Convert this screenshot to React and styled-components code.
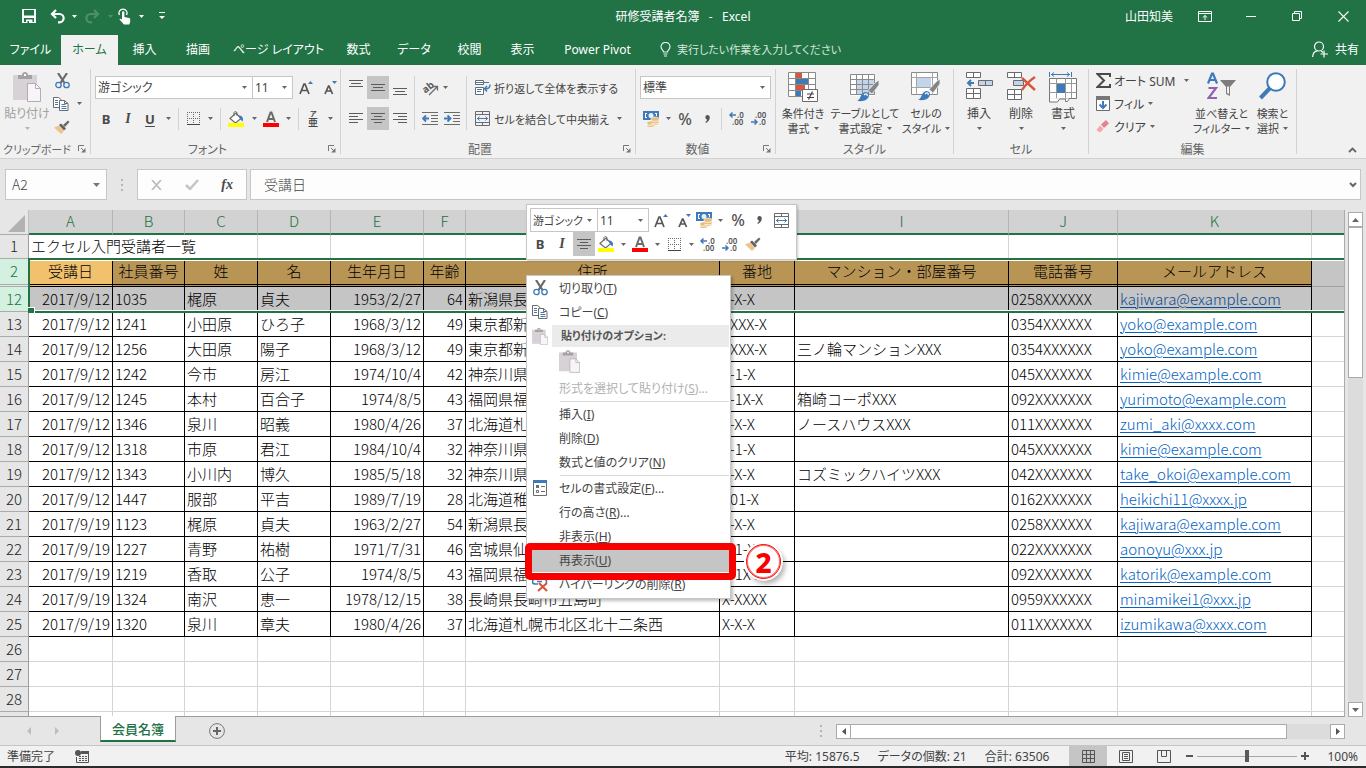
import React from "react";
import styled, { createGlobalStyle, css } from "styled-components";

const UI = `"Noto Sans", "Noto Sans CJK JP", sans-serif`;
const CELL = `"Noto Sans CJK JP", "Noto Sans", sans-serif`;
const GREEN = "#217346";
const GRAY = "#6b6b6b";
const BLUE = "#3f7ab8";

const Global = createGlobalStyle`
  * { box-sizing: border-box; }
  body { margin: 0; font-family: ${UI}; font-size: 12px; color: #444; font-feature-settings: "palt"; overflow: hidden; }
  button, input, select { font: inherit; font-feature-settings: inherit; color: inherit; }
  button { border: 0; padding: 0; background: none; white-space: nowrap; }
  svg { display: block; flex: none; }
`;

/* ---------- page frame ---------- */
const Window = styled.div`
  position: relative;
  height: 100vh;
  display: flex;
  flex-direction: column;
  background: #e6e6e6;
  border-bottom: 2px solid #2b2b2b;
`;
const TitleBar = styled.header`
  height: 35px;
  display: grid;
  grid-template-columns: 1fr auto 1fr;
  align-items: center;
  padding-bottom: 3px;
  background: ${GREEN};
  color: #fff;
  flex: none;
`;
const QuickBar = styled.div`
  display: flex;
  align-items: center;
  padding-left: 18px;
`;
const WindowTools = styled.div`
  display: flex;
  align-items: center;
  justify-content: flex-end;
`;
const UserName = styled.span`margin-right: 9px;`;
const DocTitle = styled.h1`
  margin: 0;
  font-size: 12px;
  font-weight: 400;
  white-space: pre;
`;
const TabBar = styled.nav`
  height: 30px;
  display: flex;
  align-items: stretch;
  background: ${GREEN};
  color: #fff;
  flex: none;
`;
const Tab = styled.button`
  width: ${(p) => p.$w}px;
  padding-bottom: 2px;
  ${(p) => p.$active && css`background: #f1f1f1; color: ${GREEN};`}
`;
const TellMe = styled.button`
  display: flex;
  align-items: center;
  gap: 6px;
  margin-left: 14px;
  padding-bottom: 2px;
  font-size: 11px;
  color: #d5e6dc;
`;
const Share = styled.button`
  display: flex;
  align-items: center;
  gap: 7px;
  margin-left: auto;
  padding: 0 7px 2px 0;
`;

/* ---------- ribbon ---------- */
const Ribbon = styled.div`
  height: 94px;
  display: flex;
  background: #f1f1f1;
  border-bottom: 1px solid #d2d2d2;
  padding: 4px 0 1px;
  flex: none;
`;
const Group = styled.section`
  width: ${(p) => p.$w}px;
  display: flex;
  flex-direction: column;
  padding-right: 1px;
  background: linear-gradient(#d2d2d2, #d2d2d2) right top / 1px calc(100% - 3px) no-repeat;
`;
const GroupBody = styled.div`
  flex: 1;
  min-height: 0;
  display: flex;
  padding-left: ${(p) => p.$pad || 0}px;
`;
const GroupFoot = styled.div`
  height: 17px;
  flex: none;
  display: grid;
  grid-template-columns: ${(p) => (p.$launch ? "1fr 16px" : "1fr")};
  align-items: center;
  justify-items: center;
  color: #666;
  white-space: nowrap;
  font-size: ${(p) => (p.$compact ? 11 : 12)}px;
`;
const Stack = styled.div`
  display: flex;
  flex-direction: column;
  gap: ${(p) => p.$gap || 0}px;
  padding-top: ${(p) => p.$top || 0}px;
`;
const Line = styled.div`
  display: flex;
  align-items: center;
  height: ${(p) => p.$h || 23}px;
`;
const ToolButton = styled.button`
  width: ${(p) => p.$w || 22}px;
  height: ${(p) => p.$h || 23}px;
  display: flex;
  align-items: center;
  justify-content: center;
  flex: none;
  background: ${(p) => (p.$on ? "#c5c5c5" : "none")};
`;
const TextTool = styled.button`
  display: flex;
  align-items: center;
  gap: ${(p) => p.$gap || 3}px;
  height: 23px;
  padding: 0 4px;
  font-size: ${(p) => (p.$compact ? 11 : 12)}px;
`;
const BigTool = styled.button`
  width: ${(p) => p.$w}px;
  display: flex;
  flex-direction: column;
  align-items: center;
  line-height: 15px;
  padding-top: 3px;
  font-size: ${(p) => (p.$compact ? 11 : 12)}px;
  color: ${(p) => (p.$off ? "#a0a0a0" : "inherit")};
`;
const BigIcon = styled.span`
  height: 34px;
`;
const BigLine = styled.span`
  display: flex;
  align-items: center;
  justify-content: center;
  gap: 4px;
  height: 15px;
`;
const Rule = styled.span`
  width: 1px;
  height: ${(p) => p.$h || 22}px;
  margin: 0 4px 0 3px;
  background: #d2d2d2;
  flex: none;
`;
const Combo = styled.span`
  width: ${(p) => p.$w}px;
  height: ${(p) => p.$h || 23}px;
  display: grid;
  align-items: center;
  background: #fff;
  border: 1px solid #c6c6c6;
  font-size: ${(p) => (p.$compact ? 11 : 12)}px;
  flex: none;
  & + & { border-left-width: ${(p) => (p.$joined ? 0 : 1)}px; }
  & > * { grid-area: 1 / 1; }
  & > svg { justify-self: end; margin-right: 5px; pointer-events: none; }
`;
const Select = styled.select`
  appearance: none;
  border: 0;
  background: none;
  width: 100%;
  height: 100%;
  padding: 0 2px;
`;
const Collapse = styled.button`
  margin: auto 9px 4px auto;
`;
const Letter = styled.span`
  font-weight: 700;
  font-size: ${(p) => p.$size || 13}px;
  line-height: 16px;
  font-style: ${(p) => (p.$italic ? "italic" : "normal")};
  font-family: ${(p) => (p.$italic ? `"Liberation Serif", serif` : UI)};
  text-decoration: ${(p) => (p.$under ? "underline" : "none")};
  text-underline-offset: 2px;
  color: #4a4a4a;
`;
const Percent = styled.span`
  font-size: 16px;
  font-weight: 500;
  color: #555;
`;

/* ---------- formula bar ---------- */
const FormulaBar = styled.div`
  height: 51px;
  display: flex;
  align-items: center;
  padding: 0 5px;
  flex: none;
`;
const FieldBox = styled.div`
  height: 31px;
  display: flex;
  align-items: center;
  background: #fdfdfd;
  border: 1px solid #c6c6c6;
`;
const NameField = styled(FieldBox)`
  width: 102px;
  padding: 0 6px;
`;
const FormulaTools = styled(FieldBox)`
  width: 110px;
  margin: 0 3px 0 14px;
  justify-content: space-between;
  padding: 0 13px;
`;
const FormulaField = styled(FieldBox)`
  flex: 1;
  padding: 0 3px 0 13px;
`;
const PlainInput = styled.input`
  border: 0;
  background: none;
  outline: 0;
  padding: 0 0 2px;
  flex: 1;
  min-width: 0;
  font-family: ${CELL};
  font-size: 14px;
  font-weight: 300;
`;
const Grip = styled.span`
  width: 2px;
  height: 12px;
  margin-left: 14px;
  background: repeating-linear-gradient(#b5b5b5 0 2px, transparent 2px 5px);
`;

/* ---------- sheet ---------- */
const Body = styled.main`
  flex: 1;
  min-height: 0;
  display: flex;
`;
const Pane = styled.div`
  position: relative;
  flex: 1;
  overflow: hidden;
  background: #fff;
  border-right: 1px solid #ababab;
  border-bottom: 1px solid #9c9c9c;
`;
const Grid = styled.table`
  width: 100%;
  table-layout: fixed;
  border-collapse: separate;
  border-spacing: 0;
  font-family: ${CELL};
  font-size: 15px;
  font-weight: 300;
  font-feature-settings: normal;
  line-height: 21px;
  color: #000;
`;
const Col = styled.col`width: ${(p) => (p.$w ? p.$w + "px" : "auto")};`;
const Row = styled.tr`height: ${(p) => p.$h || 25}px;`;
const ColHead = styled.th`
  padding: 0 0 2px;
  font-weight: 300;
  color: ${GREEN};
  background: #d2d2d2;
  border-right: 1px solid #b4b4b4;
  border-bottom: 2px solid ${GREEN};
  &:last-child { border-right: 0; }
`;
const Corner = styled.th`
  padding: 0 3px 2px 0;
  background: #e6e6e6;
  border-right: 1px solid #c0c0c0;
  border-bottom: 1px solid #ababab;
  vertical-align: bottom;
  svg { margin-left: auto; }
`;
const RowHead = styled.th`
  padding: 0 0 2px;
  font-weight: 300;
  background: ${(p) => (p.$on ? "#d3f0e0" : "#e6e6e6")};
  color: ${(p) => (p.$on ? GREEN : "#222")};
  border-right: 1px solid #9c9c9c;
  border-bottom: ${(p) => (p.$double ? "3px double" : "1px solid")} #ababab;
`;
const Cell = styled.td`
  padding: 0 2px 2px;
  white-space: nowrap;
  overflow: hidden;
  text-align: ${(p) => p.$align || "left"};
  border-right: 1px solid ${(p) => (p.$line ? "#000" : "#d4d4d4")};
  border-bottom: 1px solid ${(p) => (p.$line ? "#000" : "#d4d4d4")};
  background: ${(p) => (p.$sel ? "#c5c5c5" : "#fff")};
  &:last-child { border-right: 0; ${(p) => p.$sel && css`border-bottom-color: #a0a0a0;`} }
`;
const TitleCell = styled(Cell)`
  overflow: visible;
`;
const FieldCell = styled(Cell)`
  text-align: center;
  background: ${(p) => (p.$current ? "#f2c16e" : "#b99555")};
  border-bottom: 3px double #000;
`;
const Mail = styled.a`
  color: ${(p) => (p.$sel ? "#0b4c92" : "#0563c1")};
  text-underline-offset: 2px;
  text-decoration-thickness: 1px;
`;
const Selection = styled.div`
  position: absolute;
  left: 28px;
  right: 0;
  top: 48px;
  height: 55px;
  border: 2px solid ${GREEN};
  border-right: 0;
  box-shadow: inset 0 1px #fff, inset 0 -1px #fff;
  pointer-events: none;
  &::after {
    content: "";
    position: absolute;
    left: -2px;
    bottom: -2px;
    width: 6px;
    height: 5px;
    background: ${GREEN};
    border-right: 1px solid #fff;
    border-top: 1px solid #fff;
  }
`;
const VScroll = styled.div`
  width: 21px;
  display: flex;
  flex-direction: column;
  padding: 2px 3px 0;
  & > div { flex: 1; background: #dcdcdc; }
`;
const VThumb = styled.span`
  display: block;
  height: 151px;
  background: #fff;
  border: 1px solid #ababab;
`;
const ScrollButton = styled.button`
  width: 15px;
  height: 15px;
  display: grid;
  place-items: center;
  background: #fff;
  border: 1px solid #ababab;
  flex: none;
`;

/* ---------- bottom ---------- */
const SheetBar = styled.div`
  height: 28px;
  display: flex;
  padding-right: 21px;
  flex: none;
`;
const SheetNav = styled.div`
  width: 100px;
  display: flex;
  align-items: center;
  gap: 24px;
  padding-left: 27px;
`;
const SheetTab = styled.button`
  width: 76px;
  height: 26px;
  margin-top: -1px;
  position: relative;
  background: #fff;
  color: ${GREEN};
  font-family: ${CELL};
  font-size: 13px;
  font-weight: 500;
  border: 1px solid #9c9c9c;
  border-top: 0;
  border-bottom: 2px solid ${GREEN};
`;
const AddSheet = styled.button`margin-left: 33px;`;
const HScroll = styled.div`
  width: 509px;
  height: 15px;
  margin: 7px 0 0 14px;
  display: flex;
  & > div { flex: 1; background: #dcdcdc; }
`;
const HThumb = styled.span`
  display: block;
  width: 91%;
  height: 15px;
  background: #fff;
  border: 1px solid #ababab;
  border-left: 0;
`;
const SheetGrip = styled(Grip)`
  margin: auto 0 auto auto;
`;
const StatusBar = styled.footer`
  height: 21px;
  display: flex;
  align-items: center;
  padding: 0 8px 0 7px;
  background: #f1f1f1;
  border-top: 1px solid #c6c6c6;
  flex: none;
`;
const StatusText = styled.span`
  margin-right: ${(p) => p.$gap}px;
  white-space: nowrap;
`;
const Totals = styled.span`margin-left: auto; display: flex;`;
const ZoomLevel = styled.output`margin-left: 16px;`;
const ZoomRange = styled.input`
  appearance: none;
  width: 100px;
  height: 12px;
  margin: 0 2px;
  background: linear-gradient(#a6a6a6, #a6a6a6) center / 100% 1px no-repeat;
  &::-webkit-slider-thumb { appearance: none; width: 4px; height: 12px; background: #5a5a5a; }
`;
const ZoomSign = styled.button`
  width: 12px;
  display: grid;
  place-items: center;
`;

/* ---------- floating parts ---------- */
const MiniBar = styled.div`
  position: absolute;
  left: 526px;
  top: 204px;
  width: 271px;
  padding: 3px 2px;
  background: #fff;
  border: 1px solid #c6c6c6;
  box-shadow: 1px 1px 2px rgba(0, 0, 0, 0.2);
  & > div:first-child { padding-left: 1px; }
`;
const Menu = styled.ul`
  position: absolute;
  left: 526px;
  top: 275px;
  width: 205px;
  margin: 0;
  padding: 0 0 2px;
  list-style: none;
  background: #fff;
  border: 1px solid #c6c6c6;
  box-shadow: 2px 2px 3px rgba(0, 0, 0, 0.25);
`;
const MenuItem = styled.button`
  width: 100%;
  height: ${(p) => p.$h || 24}px;
  display: grid;
  grid-template-columns: 26px 1fr;
  column-gap: 6px;
  align-items: center;
  justify-items: start;
  & > :first-child { justify-self: center; }
  color: ${(p) => (p.$off ? "#b1b1b1" : "#444")};
  background: ${(p) => (p.$on ? "#c5c5c5" : "none")};
`;
const MenuHead = styled.div`
  height: 22px;
  margin: 1px 0 0;
  display: grid;
  grid-template-columns: 26px 1fr;
  align-items: center;
  & > svg { justify-self: center; }
`;
const MenuHeadText = styled.strong`
  height: 22px;
  line-height: 22px;
  margin: 0 1px 0 -1px;
  padding-left: 9px;
  background: #ebebeb;
  color: #555;
  font-size: 11px;
  font-weight: 600;
`;
const MenuRule = styled.hr`
  height: 1px;
  margin: 1px 1px 0 33px;
  border: 0;
  background: #dadada;
`;
const RedFrame = styled.div`
  position: absolute;
  left: 525px;
  top: 543px;
  width: 211px;
  height: 37px;
  border: 7px solid #f80000;
  border-radius: 5px;
  pointer-events: none;
`;
const StepBadge = styled.div`
  position: absolute;
  left: 746px;
  top: 544px;
  width: 35px;
  height: 35px;
  display: grid;
  place-items: center;
  border: 1px solid #f80000;
  border-radius: 50%;
  background: #fff;
  color: #f80000;
  font-size: 28px;
  line-height: 32px;
  font-weight: 800;
  box-shadow: inset 0 0 0 1px #ff6a6a, 0 0 0 2px #fff, 3px 4px 5px 1px rgba(0, 0, 0, 0.3);
`;

/* ---------- drawings ---------- */
const Svg = ({ w, h = w, children, ...rest }) => (
  <svg width={w} height={h} viewBox={`0 0 ${w} ${h}`} fill="none" aria-hidden="true" {...rest}>{children}</svg>
);
const Caret = ({ c = "#666", up }) => (
  <Svg w={5} h={3}><path d={up ? "M0 3h5L2.5 0z" : "M0 0h5L2.5 3z"} fill={c} /></Svg>
);
const SaveIcon = () => (
  <Svg w={14}><path d="M0 0h14v14H0z" fill="#fff" /><path d="M2 1h10v5.500H2zM2 9h10v4h-1.500v-2.500H4V13H2z" fill={GREEN} /><path d="M5.500 12H7v2H5.500z" fill={GREEN} /></Svg>
);
const UndoIcon = ({ flip, c = "#fff" }) => (
  <Svg w={15} h={15}><g transform={flip ? "translate(15 0) scale(-1 1)" : ""} stroke={c} strokeWidth="2.200"><path d="M6 1L2 5l4 4M2 5h7.500a4 4 0 0 1 0 8.300H8" /></g></Svg>
);
const TouchIcon = () => (
  <Svg w={13} h={17}>
    <path d="M1.500 7A4 4 0 1 1 8.500 7" stroke="#fff" strokeWidth="1.300" />
    <path d="M4 4.500a1.200 1.200 0 0 1 2.400 0V9l4.800 1c.8.2 1 .8 1 1.600V14l-1 2.500H6L1.500 11.500c0-1 1-1.300 2.500 0z" fill="#fff" />
  </Svg>
);
const CustomizeIcon = () => <Svg w={6} h={8}><path d="M0 .500h6" stroke="#fff" /><path d="M0 4h6L3 7z" fill="#fff" /></Svg>;
const BulbIcon = () => (
  <Svg w={11} h={15}><path d="M3.500 10C3.500 8 1 7.500 1 4.800a4.400 4.400 0 0 1 9 0C10 7.500 7.500 8 7.500 10zM3.500 12h4M4 14h3" stroke="#e5f0ea" strokeWidth="1.200" /></Svg>
);
const PersonIcon = () => (
  <Svg w={16} h={17}><circle cx="7" cy="5.500" r="4.500" stroke="#fff" strokeWidth="1.200" /><path d="M.6 16c.3-4 2-6 5-6.200M9 10l2 1.500M12 9.500v7M8.500 13H16" stroke="#fff" strokeWidth="1.200" /></Svg>
);
const RibbonToggle = () => <Svg w={14} h={11}><path d="M.5.500h13v10H.5zM.5 2.500h13M7 9V4.500M4.800 6.500L7 4.500l2.200 2" stroke="#fff" /></Svg>;
const MinIcon = () => <Svg w={10} h={10}><path d="M0 5.500h10" stroke="#fff" /></Svg>;
const RestoreIcon = () => <Svg w={10} h={10}><path d="M.5 2.500h7v7h-7zM2.500 2.500v-2h7v7h-2" stroke="#fff" /></Svg>;
const CloseIcon = () => <Svg w={11} h={11}><path d="M.5.500l10 10M10.500.500l-10 10" stroke="#fff" strokeWidth="1.100" /></Svg>;

const PasteIcon = ({ w = 28, h = 30 }) => (
  <svg width={w} height={h} viewBox="0 0 28 30" fill="none" aria-hidden="true">
    <path d="M0 3h24v25H0z" fill="#d6d2d6" />
    <path d="M5 7V3h4c0-4 6-4 6 0h4v4z" fill="#a5a1a5" /><path d="M11 2h2v2h-2z" fill="#fff" />
    <path d="M14.500 11.500h8l5 5v13h-13z" fill="#f8f4f9" stroke="#b2adb3" /><path d="M22.500 11.500v5h5" stroke="#b2adb3" />
  </svg>
);
const CutIcon = () => (
  <Svg w={15} h={16}>
    <path d="M3 0l6.500 10M12 0L5.500 10" stroke={GRAY} strokeWidth="2.200" />
    <circle cx="3.500" cy="12" r="2.700" stroke={BLUE} strokeWidth="1.300" /><circle cx="11.500" cy="12" r="2.700" stroke={BLUE} strokeWidth="1.300" />
  </Svg>
);
const CopyIcon = () => (
  <Svg w={16} h={14}>
    <path d="M.5.500h5l2.500 2v8H.5z" fill="#fff" stroke={GRAY} /><path d="M2 3.500h3M2 5.500h3M2 7.500h3" stroke={BLUE} />
    <path d="M6.500 3.500h5l3.500 3v7H6.500z" fill="#fff" stroke={GRAY} /><path d="M11.500 3.500v3H15" stroke={GRAY} /><path d="M8.500 7.500h4M8.500 9.500h5M8.500 11.500h5" stroke={BLUE} />
  </Svg>
);
const BrushIcon = () => (
  <Svg w={16} h={14}>
    <path d="M0 7.500l5-2 5 5.500-3 3z" fill="#efc48a" /><path d="M5 5l2-1.500 5 5-2 2z" fill="#5f5f5f" />
    <path d="M9 5l5-4.500 1.500 1.500-4.500 5z" fill={GRAY} />
  </Svg>
);
const LaunchIcon = () => <Svg w={8} h={8}><path d="M.5 6V.500H6M3 3l3 3" stroke="#777" /><path d="M7.500 3v4.500H3z" fill="#777" /></Svg>;
const GrowIcon = ({ down, size = 15 }) => (
  <Svg w={14} h={15}>
    <path d={size > 14 ? "M1 14L5 4h1l4 10M2.500 10.500h6" : "M2 14L5.500 6h.5l3.500 8M3.300 11h5"} stroke="#555" strokeWidth="1.700" />
    <path d={down ? "M9 1h5l-2.500 3z" : "M9 4h5l-2.500-3z"} fill={BLUE} />
  </Svg>
);
const LinesIcon = ({ kind }) => {
  const d = {
    top: "M0 .500h14M2 3.500h10M0 6.500h14",
    mid: "M0 4.500h14M2 7.500h10M0 10.500h14",
    bottom: "M0 8.500h14M2 11.500h10M0 14.500h14",
    left: "M0 2.500h14M0 5.500h9M0 8.500h14M0 11.500h9",
    center: "M0 2.500h14M3 5.500h8M0 8.500h14M3 11.500h8",
    right: "M0 2.500h14M5 5.500h9M0 8.500h14M5 11.500h9",
  }[kind];
  return <Svg w={14} h={15}><path d={d} stroke="#5c5c5c" /></Svg>;
};
const BorderIcon = () => (
  <Svg w={13} h={13}><path d="M.5 0v12M6.500 0v12M12.500 0v12M0 .500h13M0 6.500h13" stroke={GRAY} strokeDasharray="1 1" /><path d="M0 12.500h13" stroke="#444" /></Svg>
);
const FillIcon = () => (
  <Svg w={16} h={16}>
    <path d="M2 7.500L8 2l5 5.500-5.500 4.500z" fill="#fff" stroke={GRAY} strokeWidth="1.200" /><path d="M6 5V1.500C6.500 0 9 .5 9 2v3" stroke={GRAY} />
    <path d="M11 4.500c3 0 5 2.500 3.500 6L12 8z" fill={BLUE} /><path d="M0 12h16v4H0z" fill="#ff0" />
  </Svg>
);
const FontColorIcon = () => (
  <Svg w={16} h={16}><path d="M4 11L7.500 1.500h1L12 11M5.200 8h5.600" stroke="#6b6b6b" strokeWidth="2" /><path d="M0 12h16v4H0z" fill="#f00" /></Svg>
);
const AngleIcon = () => (
  <Svg w={19} h={18}>
    <text x="2" y="12" fontSize="10" fontWeight="700" fill="#5c5c5c" transform="rotate(-38 7 10)">ab</text>
    <path d="M8 16l8-8M16.500 11.500v-4h-4" stroke={GRAY} strokeWidth="1.300" />
  </Svg>
);
const IndentIcon = ({ inc }) => (
  <Svg w={16} h={13}>
    <path d="M0 .500h16M9 3.500h7M9 6.500h7M9 9.500h7M0 12.500h16" stroke={GRAY} />
    <path d={inc ? "M0 6.500h6M3.500 3.500l3 3-3 3" : "M1 6.500h6M4 3.500l-3 3 3 3"} stroke={BLUE} strokeWidth="1.800" />
  </Svg>
);
const WrapIcon = () => (
  <Svg w={16} h={16}>
    <path d="M.5.500h8v4h-8zM.5 7.500h8v7h-8z" fill="#fff" stroke={GRAY} /><path d="M0 2.500h14M2 9.500h5M2 11.500h4" stroke={BLUE} />
    <path d="M15 4.500c0 3-1 4.500-5.500 4.500M12 6L9.500 9l2.500 2.500" stroke={BLUE} strokeWidth="1.500" />
  </Svg>
);
const MergeIcon = () => (
  <Svg w={15} h={15}>
    <path d="M.5.500h14v14H.5zM.5 3.500h14M.5 11.500h14M7.500.500v3M7.500 11.500v3" stroke={GRAY} /><path d="M2 7.500h11M4.500 5.500l-2 2 2 2M10.500 5.500l2 2-2 2" stroke={BLUE} />
  </Svg>
);
const MoneyIcon = () => (
  <Svg w={16} h={16}>
    <path d="M0 0h16v9H0z" fill={BLUE} /><path d="M2 2h2v1H3v3h1v1H2zM14 2h-2v1h1v2h1z" fill="#fff" /><circle cx="8" cy="4.500" r="2.500" fill="#e6eef7" />
    <path d="M8 7.500c0-2 8-2 8 0v5c0 2-5 2-5 2v1c0 1-7 1-7 0v-4c0-1.500 4-1.500 4-1.500z" fill="#e8bd7a" stroke="#fff" strokeWidth=".6" />
    <path d="M8 9.500c2 1.200 6 1.200 8 0M8 12c2 1.200 6 1.200 8 0M4 13.500c2 1 5 1 7 0" stroke="#fff" strokeWidth=".8" />
  </Svg>
);
const CommaIcon = () => <Svg w={5} h={8}><path d="M2.500 0c3.500 0 3 5.500-1.500 8L.4 7C1.700 6 2.200 5.300 2 4.500 0 4.500-.5 0 2.500 0z" fill="#555" /></Svg>;
const DecimalIcon = ({ dec }) => (
  <Svg w={18} h={17}>
    {dec ? (
      <>
        <text x="5" y="8" fontSize="8" fontWeight="600" fill="#555">.00</text><text x="9" y="15" fontSize="8" fontWeight="600" fill="#555">.0</text>
        <path d="M1 12h6M4.500 9.500L7 12l-2.500 2.500" stroke={BLUE} strokeWidth="1.500" />
      </>
    ) : (
      <>
        <text x="9" y="8" fontSize="8" fontWeight="600" fill="#555">.0</text><text x="4" y="15" fontSize="8" fontWeight="600" fill="#555">.00</text>
        <path d="M2 5h6M4.500 2.500L2 5l2.500 2.500" stroke={BLUE} strokeWidth="1.500" />
      </>
    )}
  </Svg>
);
const CondIcon = () => (
  <Svg w={31} h={31}>
    <path d="M.5.500h27v24H.5z" fill="#fff" /><path d="M8 1h6v6H8zM8 13h9v5H8z" fill="#d6583c" /><path d="M8 7h12v6H8zM8 18h5v7H8z" fill={BLUE} />
    <path d="M.5.500h27v24H.5zM7.500.500v24M20.500.500v24M.5 6.500h27M.5 12.500h27M.5 18.500h27" stroke="#8a8a8a" />
    <path d="M14.500 17.500h15v12h-15z" fill="#fff" stroke={GRAY} /><path d="M19 22h7M19 25.500h7M24.500 19.500l-4 8" stroke="#444" strokeWidth="1.200" />
  </Svg>
);
const PaintBrush = ({ x, y }) => (
  <g transform={`translate(${x} ${y})`}>
    <path d="M22 0v5l-7 9-4-3.500L19 2z" fill="#858585" stroke="#f1f1f1" strokeWidth=".8" />
    <path d="M0 21c4-1 3-8 8-9 4 0 5 3 3 6-2 3-6 3.500-11 3z" fill={BLUE} /><path d="M7 15c2-2 4-1 3 1" stroke="#fff" strokeWidth="1.200" />
  </g>
);
const TableFmtIcon = () => (
  <Svg w={30} h={30}>
    <path d="M1 2h24v22H1z" fill="#fff" /><path d="M7 8h18v15H7z" fill="#c3d5ea" />
    <path d="M.5 2.500h24v20H.5zM6.500 2.500v20M12.500 2.500v20M18.500 2.500v20M.5 7.500h24M.5 12.500h24M.5 17.500h24" stroke="#8a8a8a" />
    <PaintBrush x={7} y={8} />
  </Svg>
);
const CellStyleIcon = () => (
  <Svg w={30} h={30}>
    <path d="M.5.500h26v22H.5z" fill="#fff" stroke="#8a8a8a" /><path d="M6 6h14v9H6z" fill="#c3d5ea" />
    <path d="M5.500.500v22M21.500.500v22M.5 5.500h26M.5 15.500h26" stroke="#a5a5a5" />
    <PaintBrush x={7} y={7} />
  </Svg>
);
const InsertIcon = () => (
  <Svg w={27} h={29}>
    <path d="M.5.500h14v5H.5zM7.500.500v5M.5 16.500h14v10H.5zM7.500 16.500v10M.5 21.500h14" fill="#fff" stroke={GRAY} />
    <path d="M12.500 8.500h14v5h-14zM19.500 8.500v5" fill="#c3d5ea" stroke={GRAY} /><path d="M2 11h6M5 8l-3 3 3 3" stroke={BLUE} strokeWidth="2" />
  </Svg>
);
const DeleteIcon = () => (
  <Svg w={29} h={29}>
    <path d="M.5.500h14v5H.5zM7.500.500v5M.5 17.500h14v10H.5zM7.500 17.500v10M.5 22.500h14" fill="#fff" stroke={GRAY} /><path d="M6.500 8.500h10v5h-10z" fill="#c3d5ea" stroke={GRAY} />
    <path d="M15 6l13 12M28 5c-6 4-9 7-13 13" stroke="#d6583c" strokeWidth="2.400" />
  </Svg>
);
const FormatIcon = () => (
  <Svg w={28} h={31}>
    <path d="M.5 0v5M22.500 0v5M2 2.500h19M5 .500L2.500 2.500 5 4.500M18 .500l2.500 2-2.500 2" stroke={BLUE} />
    <path d="M.5 6.500h27v20H.5z" fill="#fff" stroke="#777" /><path d="M7.500 6.500v20M16.500 6.500v20M22.500 6.500v20M.5 11.500h27M.5 20.500h27" stroke="#999" />
    <path d="M8 12h8v9H8z" fill={BLUE} /><path d="M.5 26v4h8l2-3h6v2.500h2l2-3" stroke="#777" fill="#fff" />
  </Svg>
);
const SigmaIcon = () => <Svg w={15} h={15}><path d="M14 4V1H1.500L8 7.500 1.500 14H14v-3" stroke="#4a4a4a" strokeWidth="2" /></Svg>;
const FillDownIcon = () => <Svg w={14} h={15}><path d="M.5.500h13v14H.5z" fill="#fff" stroke={GRAY} /><path d="M0 0h14v4H0z" fill="#777" /><path d="M7 5v7M3.500 8.500L7 12l3.500-3.500" stroke={BLUE} strokeWidth="2" /></Svg>;
const EraserIcon = () => <Svg w={14} h={13}><path d="M5 4.500L10 0l3 3.500-5 4.500z" fill="#e8828f" /><path d="M4 5.500l3.500 3.500L4 12.500.5 10z" fill="#f2a7b0" /></Svg>;
const SortIcon = () => (
  <Svg w={29} h={28}>
    <path d="M1 11.500L5 1.500h1l4 10M2.500 8h6.500" stroke={BLUE} strokeWidth="2.200" /><path d="M1.500 16H9L1.500 26h8.500" stroke="#9460b0" strokeWidth="2.200" />
    <path d="M13 8h16l-6 7v9l-4-2v-7z" fill="#7d7d7d" /><path d="M20 15v6l2 1v-8z" fill="#f1f1f1" />
  </Svg>
);
const FindIcon = () => <Svg w={27} h={28}><circle cx="17" cy="10" r="8.800" fill="#fff" stroke={BLUE} strokeWidth="2" /><path d="M11 16L1.500 26" stroke={BLUE} strokeWidth="4" /></Svg>;
const ChevronUp = () => <Svg w={9} h={6}><path d="M1 5l3.500-3.500L8 5" stroke="#666" strokeWidth="1.800" /></Svg>;
const FormatCellsIcon = () => (
  <Svg w={14} h={16}><path d="M.5.500h13v15H.5z" fill="#fff" stroke={GRAY} /><path d="M0 0h14v3H0z" fill={BLUE} /><path d="M3 5h3v3H3z" fill={GRAY} /><path d="M3.500 10.500h2v2h-2zM8 6.500h4M8 11.500h4" stroke={GRAY} /></Svg>
);
const UnlinkIcon = () => (
  <Svg w={17} h={15}>
    <path d="M6 7H3a2.500 2.500 0 0 1 0-5h4M8 2h4a2.500 2.500 0 0 1 2 4M5 4.500h5" stroke={BLUE} strokeWidth="1.600" /><path d="M7 6l8 8M15 6l-9 8" stroke="#d6583c" strokeWidth="2.200" />
  </Svg>
);

/* ---------- parts ---------- */
const Drop = ({ w = 14, label }) => <ToolButton $w={w} aria-label={label}><Caret /></ToolButton>;
const ComboBox = ({ label, value, ...rest }) => (
  <Combo {...rest}>
    <Select aria-label={label} defaultValue={value}><option>{value}</option></Select>
    <Caret />
  </Combo>
);
const RibbonGroup = ({ name, w, pad, launch, compact, children }) => (
  <Group $w={w} aria-label={name}>
    <GroupBody $pad={pad}>{children}</GroupBody>
    <GroupFoot $launch={launch} $compact={compact}><span>{name}</span>{launch && <button aria-label={`${name}の設定`}><LaunchIcon /></button>}</GroupFoot>
  </Group>
);
const Big = ({ w, icon, lines, off, compact, caretRow }) => (
  <BigTool $w={w} $off={off} $compact={compact}>
    <BigIcon>{icon}</BigIcon>
    {lines.map((t, i) => (
      <BigLine key={t}>{t}{!caretRow && i === lines.length - 1 && <Caret />}</BigLine>
    ))}
    {caretRow && <BigLine><Caret c={off ? "#b5b5b5" : "#666"} /></BigLine>}
  </BigTool>
);

const TABS = [["ファイル", 61], ["ホーム", 57], ["挿入", 53], ["描画", 54], ["ページ レイアウト", 107], ["数式", 53], ["データ", 58], ["校閲", 53], ["表示", 53], ["Power Pivot", 97]];
const COLS = [["A", 84], ["B", 72], ["C", 73], ["D", 73], ["E", 93], ["F", 42], ["G", 254], ["H", 75], ["I", 214], ["J", 109], ["K", 194]];
const FIELDS = ["受講日", "社員番号", "姓", "名", "生年月日", "年齢", "住所", "番地", "マンション・部屋番号", "電話番号", "メールアドレス"];
const ALIGN = ["right", "left", "left", "left", "right", "right", "left", "left", "left", "left", "left"];
const PEOPLE = [
  [12, "2017/9/12", "1035", "梶原", "貞夫", "1953/2/27", "64", "新潟県長岡市", "X-X-X", "", "0258XXXXXX", "kajiwara@example.com"],
  [13, "2017/9/12", "1241", "小田原", "ひろ子", "1968/3/12", "49", "東京都新宿区", "XXXX-X", "", "0354XXXXXX", "yoko@example.com"],
  [14, "2017/9/12", "1256", "大田原", "陽子", "1968/3/12", "49", "東京都新宿区", "XXXX-X", "三ノ輪マンションXXX", "0354XXXXXX", "yoko@example.com"],
  [15, "2017/9/12", "1242", "今市", "房江", "1974/10/4", "42", "神奈川県", "X-1-X", "", "045XXXXXXX", "kimie@example.com"],
  [16, "2017/9/12", "1245", "本村", "百合子", "1974/8/5", "43", "福岡県福岡市", "X-1X-X", "箱崎コーポXXX", "092XXXXXXX", "yurimoto@example.com"],
  [17, "2017/9/12", "1346", "泉川", "昭義", "1980/4/26", "37", "北海道札幌市", "X-X-X", "ノースハウスXXX", "011XXXXXXX", "zumi_aki@xxxx.com"],
  [18, "2017/9/12", "1318", "市原", "君江", "1984/10/4", "32", "神奈川県", "X-1-X", "", "045XXXXXXX", "kimie@example.com"],
  [19, "2017/9/12", "1343", "小川内", "博久", "1985/5/18", "32", "神奈川県", "X-X-X", "コズミックハイツXXX", "042XXXXXXX", "take_okoi@example.com"],
  [20, "2017/9/12", "1447", "服部", "平吉", "1989/7/19", "28", "北海道稚内市", "X01-X", "", "0162XXXXXX", "heikichi11@xxxx.jp"],
  [21, "2017/9/19", "1123", "梶原", "貞夫", "1963/2/27", "54", "新潟県長岡市", "X-X-X", "", "0258XXXXXX", "kajiwara@example.com"],
  [22, "2017/9/19", "1227", "青野", "祐樹", "1971/7/31", "46", "宮城県仙台市", "X-1-X", "", "022XXXXXXX", "aonoyu@xxx.jp"],
  [23, "2017/9/19", "1219", "香取", "公子", "1974/8/5", "43", "福岡県福岡市", "X-1X-X", "", "092XXXXXXX", "katorik@example.com"],
  [24, "2017/9/19", "1324", "南沢", "恵一", "1978/12/15", "38", "長崎県長崎市五島町", "X-XXXX", "", "0959XXXXXX", "minamikei1@xxx.jp"],
  [25, "2017/9/19", "1320", "泉川", "章夫", "1980/4/26", "37", "北海道札幌市北区北十二条西", "X-X-X", "", "011XXXXXXX", "izumikawa@xxxx.com"],
];
const Item = ({ icon, text, k, tail = "", ...rest }) => (
  <li><MenuItem {...rest}><span>{icon}</span><span>{text}(<u>{k}</u>){tail}</span></MenuItem></li>
);

export default function App() {
  return (
    <Window>
      <Global />
      <TitleBar>
        <QuickBar>
          <ToolButton aria-label="上書き保存"><SaveIcon /></ToolButton>
          <ToolButton $w={34} aria-label="元に戻す"><UndoIcon /></ToolButton>
          <ToolButton $w={1} aria-label="元に戻す履歴"><Caret c="#fff" /></ToolButton>
          <ToolButton $w={34} aria-label="やり直し"><UndoIcon flip c="#4f8f6c" /></ToolButton>
          <ToolButton $w={2} aria-label="やり直し履歴"><Caret c="#4f8f6c" /></ToolButton>
          <ToolButton $w={26} aria-label="タッチ/マウス"><TouchIcon /></ToolButton>
          <ToolButton $w={8} aria-label="モード一覧"><Caret c="#fff" /></ToolButton>
          <ToolButton $w={34} aria-label="カスタマイズ"><CustomizeIcon /></ToolButton>
        </QuickBar>
        <DocTitle>研修受講者名簿   -   Excel</DocTitle>
        <WindowTools>
          <UserName>山田知美</UserName>
          <ToolButton $w={46} aria-label="リボンの表示"><RibbonToggle /></ToolButton>
          <ToolButton $w={46} aria-label="最小化"><MinIcon /></ToolButton>
          <ToolButton $w={46} aria-label="元のサイズ"><RestoreIcon /></ToolButton>
          <ToolButton $w={46} aria-label="閉じる"><CloseIcon /></ToolButton>
        </WindowTools>
      </TitleBar>
      <TabBar>
        {TABS.map(([t, w]) => <Tab key={t} $w={w} $active={t === "ホーム"}>{t}</Tab>)}
        <TellMe><BulbIcon />実行したい作業を入力してください</TellMe>
        <Share><PersonIcon />共有</Share>
      </TabBar>

      <Ribbon>
        <RibbonGroup name="クリップボード" w={91} pad={4} launch compact>
          <Big w={46} off caretRow icon={<PasteIcon />} lines={["貼り付け"]} />
          <Stack>
            <Line><ToolButton $w={24} aria-label="切り取り"><CutIcon /></ToolButton></Line>
            <Line><ToolButton aria-label="コピー"><CopyIcon /></ToolButton><Drop label="コピーの種類" /></Line>
            <Line><ToolButton $w={24} aria-label="書式のコピー"><BrushIcon /></ToolButton></Line>
          </Stack>
        </RibbonGroup>
        <RibbonGroup name="フォント" w={250} pad={4} launch>
          <Stack $top={7} $gap={8}>
            <Line>
              <ComboBox label="フォント" value="游ゴシック" $w={158} />
              <ComboBox label="フォント サイズ" value="11" $w={40} $joined />
              <ToolButton $w={26} aria-label="拡大"><GrowIcon /></ToolButton>
              <ToolButton aria-label="縮小"><GrowIcon down size={12} /></ToolButton>
            </Line>
            <Line>
              <ToolButton aria-label="太字"><Letter>B</Letter></ToolButton>
              <ToolButton aria-label="斜体"><Letter $italic $size={14}>I</Letter></ToolButton>
              <ToolButton aria-label="下線"><Letter $under>U</Letter></ToolButton>
              <Drop label="下線の種類" /><Rule />
              <ToolButton $w={20} aria-label="罫線"><BorderIcon /></ToolButton><Drop label="罫線の種類" /><Rule />
              <ToolButton aria-label="塗りつぶし"><FillIcon /></ToolButton><Drop label="塗りつぶしの色" />
              <ToolButton $w={20} aria-label="フォントの色"><FontColorIcon /></ToolButton><Drop label="色の一覧" /><Rule />
              <ToolButton $w={20} aria-label="ふりがな">
                <Svg w={12} h={20}><text x="3" y="7" fontSize="7" fontWeight="700" fill="#444">ア</text><text x="1" y="17" fontSize="10" fontWeight="500" fill="#444">亜</text></Svg>
              </ToolButton><Drop label="ふりがなの設定" />
            </Line>
          </Stack>
        </RibbonGroup>
        <RibbonGroup name="配置" w={295} pad={4} launch>
          <Stack $top={7} $gap={8}>
            <Line>
              <ToolButton aria-label="上揃え"><LinesIcon kind="top" /></ToolButton>
              <ToolButton $on aria-label="上下中央揃え"><LinesIcon kind="mid" /></ToolButton>
              <ToolButton aria-label="下揃え"><LinesIcon kind="bottom" /></ToolButton>
            </Line>
            <Line>
              <ToolButton aria-label="左揃え"><LinesIcon kind="left" /></ToolButton>
              <ToolButton $on aria-label="中央揃え"><LinesIcon kind="center" /></ToolButton>
              <ToolButton aria-label="右揃え"><LinesIcon kind="right" /></ToolButton>
            </Line>
          </Stack>
          <Stack $top={7}><Rule $h={54} /></Stack>
          <Stack $top={7} $gap={8}>
            <Line><ToolButton aria-label="方向"><AngleIcon /></ToolButton><Drop w={8} label="方向の種類" /></Line>
            <Line>
              <ToolButton aria-label="インデントを減らす"><IndentIcon /></ToolButton>
              <ToolButton aria-label="インデントを増やす"><IndentIcon inc /></ToolButton>
            </Line>
          </Stack>
          <Stack $top={7}><Rule $h={54} /></Stack>
          <Stack $top={7} $gap={8}>
            <Line><TextTool $compact><WrapIcon />折り返して全体を表示する</TextTool></Line>
            <Line><TextTool $compact $gap={4}><MergeIcon />セルを結合して中央揃え</TextTool><Drop label="結合の種類" /></Line>
          </Stack>
        </RibbonGroup>
        <RibbonGroup name="数値" w={140} pad={4} launch>
          <Stack $top={7} $gap={8}>
            <Line><ComboBox label="表示形式" value="標準" $w={131} /></Line>
            <Line>
              <ToolButton aria-label="通貨"><MoneyIcon /></ToolButton><Drop w={12} label="通貨の種類" />
              <ToolButton aria-label="パーセント"><Percent>%</Percent></ToolButton>
              <ToolButton aria-label="桁区切り"><CommaIcon /></ToolButton><Rule />
              <ToolButton aria-label="小数点以下を増やす"><DecimalIcon /></ToolButton>
              <ToolButton aria-label="小数点以下を減らす"><DecimalIcon dec /></ToolButton>
            </Line>
          </Stack>
        </RibbonGroup>
        <RibbonGroup name="スタイル" w={178}>
          <Big w={54} icon={<CondIcon />} lines={["条件付き", "書式"]} compact />
          <Big w={70} icon={<TableFmtIcon />} lines={["テーブルとして", "書式設定"]} compact />
          <Big w={52} icon={<CellStyleIcon />} lines={["セルの", "スタイル"]} compact />
        </RibbonGroup>
        <RibbonGroup name="セル" w={135} pad={4}>
          <Big w={42} caretRow icon={<InsertIcon />} lines={["挿入"]} />
          <Big w={42} caretRow icon={<DeleteIcon />} lines={["削除"]} />
          <Big w={42} caretRow icon={<FormatIcon />} lines={["書式"]} />
        </RibbonGroup>
        <RibbonGroup name="編集" w={208} pad={3}>
          <Stack>
            <Line><TextTool><SigmaIcon />オート SUM</TextTool><Drop label="集計の種類" /></Line>
            <Line><TextTool $gap={4}><FillDownIcon />フィル<Caret /></TextTool></Line>
            <Line><TextTool $gap={4}><EraserIcon />クリア<Caret /></TextTool></Line>
          </Stack>
          <Big w={56} icon={<SortIcon />} lines={["並べ替えと", "フィルター"]} compact />
          <Big w={46} icon={<FindIcon />} lines={["検索と", "選択"]} compact />
        </RibbonGroup>
        <Collapse aria-label="リボンを折りたたむ"><ChevronUp /></Collapse>
      </Ribbon>

      <FormulaBar>
        <NameField><PlainInput aria-label="名前ボックス" defaultValue="A2" /><Svg w={7} h={4}><path d="M0 0h7L3.500 4z" fill="#777" /></Svg></NameField>
        <Grip />
        <FormulaTools>
          <button aria-label="キャンセル"><Svg w={11} h={10}><path d="M1 0l9 10M10 0L1 10" stroke="#bdbdbd" strokeWidth="1.800" /></Svg></button>
          <button aria-label="入力"><Svg w={14} h={11}><path d="M1 6l4 4 8-9" stroke="#c6c6c6" strokeWidth="2.600" /></Svg></button>
          <button aria-label="関数の挿入"><Letter $italic $size={14}>fx</Letter></button>
        </FormulaTools>
        <FormulaField><PlainInput aria-label="数式バー" defaultValue="受講日" /><Svg w={8} h={6}><path d="M1 1l3 3 3-3" stroke="#666" strokeWidth="2" /></Svg></FormulaField>
      </FormulaBar>

      <Body>
        <Pane>
          <Grid>
            <colgroup><Col $w={29} />{COLS.map(([n, w]) => <Col key={n} $w={w} />)}<Col /></colgroup>
            <thead>
              <Row>
                <Corner><Svg w={17} h={17}><path d="M17 0v17H0z" fill="#b2b2b2" /></Svg></Corner>
                {COLS.map(([n]) => <ColHead key={n}>{n}</ColHead>)}<ColHead />
              </Row>
            </thead>
            <tbody>
              <Row $h={24}>
                <RowHead>1</RowHead><TitleCell colSpan={3}>エクセル入門受講者一覧</TitleCell>
                {COLS.slice(3).map(([n]) => <Cell key={n} />)}<Cell />
              </Row>
              <Row $h={28}>
                <RowHead $on $double>2</RowHead>
                {FIELDS.map((f, i) => <FieldCell key={f} $line $current={i === 0}>{f}</FieldCell>)}<Cell $sel />
              </Row>
              {PEOPLE.map(([n, ...vals]) => (
                <Row key={n}>
                  <RowHead $on={n === 12}>{n}</RowHead>
                  {vals.map((v, i) => (
                    <Cell key={i} $line $sel={n === 12} $align={ALIGN[i]}>
                      {i === 10 ? <Mail $sel={n === 12} href={`mailto:${v}`}>{v}</Mail> : v}
                    </Cell>
                  ))}
                  <Cell $sel={n === 12} />
                </Row>
              ))}
              {[26, 27, 28, ""].map((n, r) => (
                <Row key={r}><RowHead>{n}</RowHead>{COLS.map(([c]) => <Cell key={c} />)}<Cell /></Row>
              ))}
            </tbody>
          </Grid>
          <Selection />
        </Pane>
        <VScroll>
          <ScrollButton aria-label="上へ"><Svg w={7} h={4}><path d="M0 4h7L3.500 0z" fill="#666" /></Svg></ScrollButton>
          <div><VThumb /></div>
          <ScrollButton aria-label="下へ"><Svg w={7} h={4}><path d="M0 0h7L3.500 4z" fill="#666" /></Svg></ScrollButton>
        </VScroll>
      </Body>

      <SheetBar>
        <SheetNav>
          <Svg w={4} h={8}><path d="M4 0v8L0 4z" fill="#bdbdbd" /></Svg>
          <Svg w={4} h={8}><path d="M0 0v8l4-4z" fill="#bdbdbd" /></Svg>
        </SheetNav>
        <SheetTab>会員名簿</SheetTab>
        <AddSheet aria-label="新しいシート"><Svg w={16}><circle cx="8" cy="8" r="7.400" stroke="#777" /><path d="M8 4v8M4 8h8" stroke="#666" strokeWidth="2" /></Svg></AddSheet>
        <SheetGrip />
        <HScroll>
          <ScrollButton aria-label="左へ"><Svg w={4} h={7}><path d="M4 0v7L0 3.500z" fill="#555" /></Svg></ScrollButton>
          <div><HThumb /></div>
          <ScrollButton aria-label="右へ"><Svg w={4} h={7}><path d="M0 0v7l4-3.500z" fill="#555" /></Svg></ScrollButton>
        </HScroll>
      </SheetBar>
      <StatusBar>
        <StatusText $gap={20}>準備完了</StatusText>
        <Svg w={14} h={13}><path d="M7 1.500h6.500v11h-12V7" stroke="#555" /><path d="M6 1h8v3H6z" fill="#555" /><circle cx="3" cy="3" r="3" fill="#555" /><path d="M4 6.500h8M4 8.500h8M4 10.500h8" stroke="#555" strokeDasharray="2 1" /></Svg>
        <Totals>
          <StatusText $gap={18}>平均: 15876.5</StatusText>
          <StatusText $gap={18}>データの個数: 21</StatusText>
          <StatusText $gap={20}>合計: 63506</StatusText>
        </Totals>
        <ToolButton $w={38} $h={20} $on aria-label="標準"><Svg w={13} h={13}><path d="M.5.500h12v12H.5zM4.500.500v12M8.500.500v12M.5 4.500h12M.5 8.500h12" stroke="#555" /></Svg></ToolButton>
        <ToolButton $w={38} $h={20} aria-label="ページ レイアウト"><Svg w={14} h={13}><path d="M.5.500h13v12H.5zM3.500 2.500h7v8h-7zM5 4.500h4M5 6.500h4M5 8.500h4" stroke="#555" /></Svg></ToolButton>
        <ToolButton $w={38} $h={20} aria-label="改ページ プレビュー"><Svg w={14} h={13}><path d="M.5.500h13v12H.5zM4.500.500v6h5v-6" stroke="#555" /></Svg></ToolButton>
        <ZoomSign aria-label="縮小"><Svg w={7} h={2}><path d="M0 0h7v2H0z" fill="#555" /></Svg></ZoomSign>
        <ZoomRange type="range" aria-label="ズーム" defaultValue="50" />
        <ZoomSign aria-label="拡大"><Svg w={8}><path d="M4 0v8M0 4h8" stroke="#555" strokeWidth="2" /></Svg></ZoomSign>
        <ZoomLevel>100%</ZoomLevel>
      </StatusBar>

      <MiniBar>
        <Line $h={24}>
          <ComboBox label="フォント" value="游ゴシック" $w={68} $h={24} $compact />
          <ComboBox label="サイズ" value="11" $w={51} $h={24} $joined />
          <ToolButton $w={24} aria-label="拡大"><GrowIcon /></ToolButton>
          <ToolButton aria-label="縮小"><GrowIcon down size={12} /></ToolButton>
          <ToolButton $w={18} aria-label="通貨"><MoneyIcon /></ToolButton><Drop label="通貨の種類" />
          <ToolButton aria-label="パーセント"><Percent>%</Percent></ToolButton>
          <ToolButton $w={20} aria-label="桁区切り"><CommaIcon /></ToolButton>
          <ToolButton $w={24} aria-label="セルを結合"><MergeIcon /></ToolButton>
        </Line>
        <Line $h={24}>
          <ToolButton aria-label="太字"><Letter>B</Letter></ToolButton>
          <ToolButton aria-label="斜体"><Letter $italic $size={14}>I</Letter></ToolButton>
          <ToolButton $h={24} $on aria-label="中央揃え"><LinesIcon kind="center" /></ToolButton>
          <ToolButton aria-label="塗りつぶし"><FillIcon /></ToolButton><Drop w={12} label="塗りつぶしの色" />
          <ToolButton aria-label="フォントの色"><FontColorIcon /></ToolButton><Drop w={12} label="色の一覧" />
          <ToolButton aria-label="罫線"><BorderIcon /></ToolButton><Drop w={12} label="罫線の種類" />
          <ToolButton aria-label="小数点以下を増やす"><DecimalIcon /></ToolButton>
          <ToolButton aria-label="小数点以下を減らす"><DecimalIcon dec /></ToolButton>
          <ToolButton $w={24} aria-label="書式のコピー"><BrushIcon /></ToolButton>
        </Line>
      </MiniBar>

      <Menu>
        <Item icon={<CutIcon />} text="切り取り" k="T" />
        <Item icon={<CopyIcon />} text="コピー" k="C" />
        <li><MenuHead><PasteIcon w={16} h={17} /><MenuHeadText>貼り付けのオプション:</MenuHeadText></MenuHead></li>
        <li><MenuItem $h={29} aria-label="貼り付け"><span /><PasteIcon w={21} h={23} /></MenuItem></li>
        <Item $off text="形式を選択して貼り付け" k="S" tail="..." />
        <li><MenuRule /></li>
        <Item text="挿入" k="I" />
        <Item text="削除" k="D" />
        <Item text="数式と値のクリア" k="N" />
        <li><MenuRule /></li>
        <Item icon={<FormatCellsIcon />} text="セルの書式設定" k="F" tail="..." />
        <Item text="行の高さ" k="R" tail="..." />
        <Item text="非表示" k="H" />
        <Item $on text="再表示" k="U" />
        <Item icon={<UnlinkIcon />} text="ハイパーリンクの削除" k="R" />
      </Menu>
      <RedFrame />
      <StepBadge>2</StepBadge>
    </Window>
  );
}
